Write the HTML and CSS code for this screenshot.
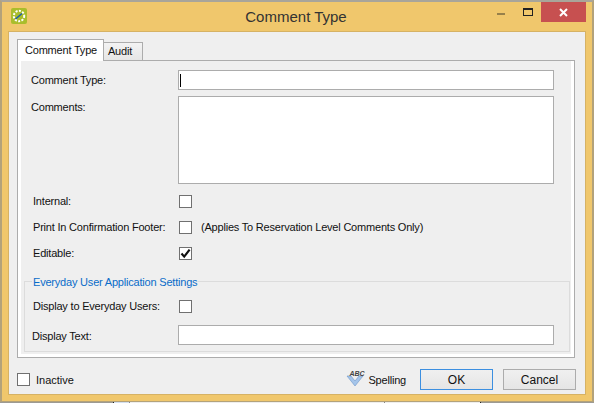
FILE: index.html
```html
<!DOCTYPE html>
<html>
<head>
  <link rel="stylesheet" href="styles.css">
  <title>Comment Type</title>
</head>
<body>
  <div class="window">
    <div class="titlebar">
      <div class="app-icon">
        <svg width="16" height="16" viewBox="0 0 16 16">
          <rect width="16" height="16" rx="2" fill="#a9bd2c"/>
          <circle cx="8" cy="8" r="5.2" fill="none" stroke="#fff" stroke-width="2" stroke-dasharray="2 1.4"/>
          <path d="M4.5 11 L11 5.5" stroke="#1f5fa8" stroke-width="1.6"/>
        </svg>
      </div>
      <div class="title">Comment Type</div>
      <div class="win-buttons">
        <div class="win-min"><span class="min-bar"></span></div>
        <div class="win-max"><span class="max-box"></span></div>
        <div class="win-close">
          <svg width="9" height="9" viewBox="0 0 9 9"><path d="M1 1 L8 8 M8 1 L1 8" stroke="#fff" stroke-width="2"/></svg>
        </div>
      </div>
    </div>
    <div class="client">
      <div class="tabs">
        <div class="tab active">Comment Type</div>
        <div class="tab">Audit</div>
      </div>
      <div class="panel">
        <div class="panel-inner">
          <div class="row row-first">
            <label class="lbl lbl-a">Comment Type:</label>
            <div class="input focused"><span class="caret"></span></div>
          </div>
          <div class="row row-top">
            <label class="lbl lbl-a">Comments:</label>
            <div class="input textarea"></div>
          </div>
          <div class="row row-check row-internal">
            <label class="lbl">Internal:</label>
            <span class="check"></span>
          </div>
          <div class="row row-check">
            <label class="lbl">Print In Confirmation Footer:</label>
            <span class="check"></span>
            <span class="note">(Applies To Reservation Level Comments Only)</span>
          </div>
          <div class="row row-check">
            <label class="lbl">Editable:</label>
            <span class="check">
              <svg width="11" height="11" viewBox="0 0 11 11"><path d="M1.5 5.5 L4.2 8.6 L9.6 1.6" fill="none" stroke="#111" stroke-width="2.2"/></svg>
            </span>
          </div>
          <div class="group">
            <div class="legend">Everyday User Application Settings</div>
            <div class="row row-check group-check">
              <label class="lbl">Display to Everyday Users:</label>
              <span class="check"></span>
            </div>
            <div class="row group-text">
              <label class="lbl lbl-b">Display Text:</label>
              <div class="input"></div>
            </div>
          </div>
        </div>
      </div>
      <div class="footer">
        <span class="check"></span>
        <span class="inactive">Inactive</span>
        <div class="spelling">
          <span class="spell-icon">
            <svg width="18" height="12" viewBox="0 0 18 12"><path d="M1 1 L5 1 L9 6 L13 1 L17 1 L9 11 Z" fill="#a5c5ea" stroke="#6d96c8" stroke-width="0.6"/></svg>
            <span class="abc">ABC</span>
          </span>
          <span class="spell-text">Spelling</span>
        </div>
        <button class="btn btn-ok">OK</button>
        <button class="btn">Cancel</button>
      </div>
    </div>
  </div>
</body>
</html>
```

FILE: styles.css
```css
html, body {
  margin: 0;
  padding: 0;
}
body {
  width: 594px;
  height: 403px;
  overflow: hidden;
  /* strip of the window behind the dialog, seen along the bottom edge */
  background: linear-gradient(to right,
    #9c9a94 0, #9c9a94 113px,
    #222 113px, #222 114px,
    #d3dff0 114px, #d3dff0 129px,
    #888 129px, #888 130px,
    #eeeeee 130px, #eeeeee 384px,
    #888 384px, #888 385px,
    #eeeeee 385px, #eeeeee 480px,
    #222 480px, #222 481px,
    #9c9a94 481px);
  font-family: "Liberation Sans", Arial, sans-serif;
  font-size: 11px;
  letter-spacing: -0.2px;
  color: #111;
}
.window {
  box-sizing: border-box;
  width: 594px;
  height: 402px;
  background: #f0c76c;
  border-top: 2px solid #a9a59a;
  border-left: 2px solid #b3a27a;
  border-right: 2px solid #b3a27a;
  border-bottom: 1px solid #b3a27a;
  display: flex;
  flex-direction: column;
}

.titlebar {
  height: 29px;
  display: flex;
  align-items: center;
  position: relative;
  flex: none;
}
.app-icon {
  margin-left: 9px;
  height: 16px;
  margin-top: -1px;
}
.title {
  position: absolute;
  left: 0;
  right: 2px;
  top: 6px;
  text-align: center;
  font-size: 15px;
  letter-spacing: 0;
  color: #333;
}
.win-buttons {
  margin-left: auto;
  margin-right: 6px;
  display: flex;
  align-self: flex-start;
  height: 20px;
}
.win-min, .win-max {
  display: flex;
  align-items: center;
  justify-content: center;
}
.win-min {
  width: 28px;
}
.win-max {
  width: 26px;
}
.min-bar {
  width: 8px;
  height: 2px;
  background: #97804a;
  margin-top: 4px;
}
.max-box {
  box-sizing: border-box;
  width: 10px;
  height: 8px;
  border: 1px solid #222;
  border-top-width: 2px;
}
.win-close {
  width: 45px;
  background: #c75050;
  display: flex;
  align-items: center;
  justify-content: center;
}

.client {
  box-sizing: border-box;
  margin: 0 6px;
  height: 364px;
  background: #efefef;
  border: 1px solid #d6b264;
  display: flex;
  flex-direction: column;
  padding: 7px 9px 0 8px;
}

.tabs {
  display: flex;
  height: 21px;
  align-items: flex-end;
  position: relative;
  z-index: 1;
  flex: none;
}
.tab {
  box-sizing: border-box;
  height: 18px;
  padding: 2px 10px 0 4px;
  border: 1px solid #acacac;
  border-bottom: none;
  border-left: none;
  background: linear-gradient(#f3f3f3, #e6e6e6);
}
.tab.active {
  box-sizing: content-box;
  height: 16px;
  padding: 4px 6px 1px 7px;
  margin-bottom: -1px;
  background: #fff;
  border-left: 1px solid #acacac;
}
.panel {
  box-sizing: border-box;
  height: 298px;
  width: 558px;
  flex: none;
  background: #fff;
  border: 1px solid #acacac;
  padding: 0 3px 3px 3px;
}
.panel-inner {
  box-sizing: border-box;
  height: 293px;
  background: #efefef;
  padding: 0 0 0 10px;
}

.row {
  display: flex;
  align-items: center;
}
.row-first {
  padding-top: 9px;
  height: 20px;
}
.row-top {
  align-items: flex-start;
  margin-top: 6px;
}
.row-check {
  height: 14px;
  margin-top: 12px;
}
.row-internal {
  margin-top: 10px;
}
.lbl {
  width: 145px;
  flex: none;
  padding-left: 2px;
  white-space: nowrap;
}
.lbl-a {
  padding-left: 0;
  width: 147px;
}
.row-top .lbl {
  margin-top: 5px;
}
.input {
  box-sizing: border-box;
  width: 376px;
  height: 20px;
  background: #fff;
  border: 1px solid #acacac;
  display: flex;
  align-items: center;
}
.textarea {
  height: 88px;
}
.caret {
  width: 1px;
  height: 13px;
  margin-left: 1px;
  background: #000;
}
.check {
  box-sizing: border-box;
  width: 13px;
  height: 13px;
  margin-left: 1px;
  flex: none;
  background: #fff;
  border: 1px solid #707070;
  display: flex;
  align-items: center;
  justify-content: center;
}
.note {
  margin-left: 9px;
  white-space: nowrap;
}

.group {
  box-sizing: border-box;
  width: 546px;
  height: 71px;
  margin: 21px 0 0 -7px;
  border: 1px solid #dcdcdc;
  position: relative;
  padding-left: 6px;
}
.legend {
  position: absolute;
  left: 7px;
  top: -6px;
  padding: 0 1px;
  background: #efefef;
  color: #0a6cc9;
  white-space: nowrap;
}
.group-check {
  margin-top: 17px;
}
.group-text {
  margin-top: 12px;
}
.lbl-b {
  padding-left: 1px;
  width: 146px;
  margin-top: 2px;
}

.footer {
  display: flex;
  align-items: center;
  height: 21px;
  padding-top: 11px;
}
.footer .check {
  margin-left: 0;
}
.inactive {
  margin-left: 6px;
  letter-spacing: 0;
}
.spelling {
  margin-left: auto;
  display: flex;
  align-items: center;
  gap: 4px;
  margin-right: 14px;
}
.spell-text {
  letter-spacing: -0.2px;
}
.spell-icon {
  position: relative;
  display: block;
  width: 18px;
  height: 17px;
  margin-top: -3px;
}
.spell-icon svg {
  position: absolute;
  left: 0;
  top: 5px;
}
.abc {
  position: absolute;
  left: 3px;
  top: 0;
  font-size: 7px;
  font-weight: bold;
  font-style: italic;
  letter-spacing: 0;
  color: #444;
}
.btn {
  box-sizing: border-box;
  width: 73px;
  height: 21px;
  padding: 0;
  margin-left: 10px;
  background: linear-gradient(#f0f0f0, #e5e5e5);
  border: 1px solid #acacac;
  font-family: inherit;
  font-size: 12px;
  letter-spacing: 0;
  color: #111;
}
.btn-ok {
  margin-left: 0;
  border-color: #3c8fe0;
}
```
